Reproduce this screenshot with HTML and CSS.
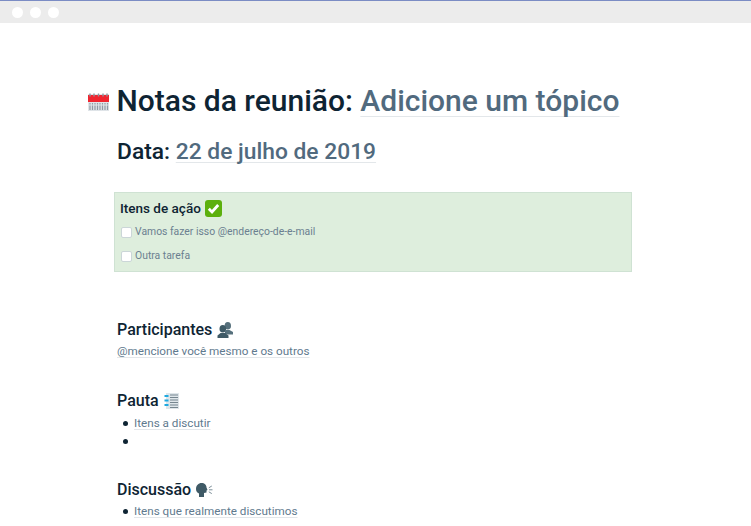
FILE: index.html
```html
<!DOCTYPE html>
<html lang="pt">
<head>
    <meta charset="UTF-8">
    <title>Notas da reunião</title>
    <link rel="stylesheet" href="styles.css">
</head>
<body>

<div class="top_bar">
    <span class="dot"></span>
    <span class="dot"></span>
    <span class="dot"></span>
</div>

<div class="page">

    <h1 class="title">
        <svg class="ic_calendar" viewBox="0 0 21 18" width="21" height="18">
            <rect x="0" y="1" width="21" height="17" fill="#dfe4e8"/>
            <rect x="0" y="2" width="21" height="7" fill="#f0252f"/>
            <path d="M2 0.500v3M6 0.500v3M10.500 0.500v3M15 0.500v3M19 0.500v3" stroke="#8d979e" stroke-width="1.400"/>
            <path d="M2 10v7M4.500 10v7M7 10v7M9.500 10v7M12 10v7M14.500 10v7M17 10v7M19.500 10v7" stroke="#8f9aa3" stroke-width="1.200"/>
            <path d="M0 12h21" stroke="#dfe4e8" stroke-width="1"/>
        </svg>
        Notas da reunião: <span class="ph">Adicione um tópico</span>
    </h1>

    <h2 class="date">Data: <span class="ph">22 de julho de 2019</span></h2>

    <div class="action_box">
        <h3 class="action_title">
            Itens de ação
            <svg class="ic_check" viewBox="0 0 17 17" width="17" height="17">
                <rect width="17" height="17" rx="3" fill="#5cb00d"/>
                <path d="M3.800 8.800l3.200 3.200 6.200-7" fill="none" stroke="#fff" stroke-width="2.800"/>
            </svg>
        </h3>
        <div class="task"><span class="box"></span>Vamos fazer isso @endereço-de-e-mail</div>
        <div class="task"><span class="box"></span>Outra tarefa</div>
    </div>

    <h3 class="section first">
        Participantes
        <svg class="ic_people" viewBox="0 0 16 16" width="16" height="16">
            <ellipse cx="10.800" cy="3.800" rx="3.200" ry="3.800" fill="#56707c"/>
            <path d="M8 12.500v-3l1-1.500h3.500l3.500 2v2.500z" fill="#56707c"/>
            <ellipse cx="5.800" cy="6.800" rx="3.300" ry="3.800" fill="#3f5a66"/>
            <path d="M0.500 16v-2.500l3-2.500h4.500l3.500 2.500v2.500z" fill="#3f5a66"/>
        </svg>
    </h3>
    <p class="line"><span class="ph">@mencione você mesmo e os outros</span></p>

    <h3 class="section second">
        Pauta
        <svg class="ic_list" viewBox="0 0 15 16" width="15" height="16">
            <rect x="2" y="0" width="13" height="16" fill="#dfe6ea"/>
            <path d="M6 2h8M6 4.500h8M6 7h8M6 9.500h8M6 12h8M6 14.500h8" stroke="#76868f" stroke-width="1.200"/>
            <path d="M0.500 3h4M0.500 7.500h4M0.500 12h4" stroke="#1fa9e0" stroke-width="2.200"/>
        </svg>
    </h3>
    <ul class="items">
        <li><span class="ph">Itens a discutir</span></li>
        <li></li>
    </ul>

    <h3 class="section third">
        Discussão
        <svg class="ic_talk" viewBox="0 0 17 14" width="17" height="14">
            <path d="M5.500 0c3 0 5 2 5 4.500l1 2.500-1 .5v2l-2.500.5v4h-5v-3.500c-2-1-3-2.500-3-4.500 0-3.500 2.500-6 5.500-6z" fill="#3f5a66"/>
            <path d="M13 6.800h3.500M12.800 4.800l3-1.800M12.800 8.800l3 1.800" stroke="#7d8f99" stroke-width="1"/>
        </svg>
    </h3>
    <ul class="items last">
        <li><span class="ph">Itens que realmente discutimos</span></li>
    </ul>

</div>

</body>
</html>
```

FILE: styles.css
```css
*{
    margin: 0px;
    padding: 0px;
    box-sizing: border-box;
}
html,body{
    height: 526px;
    overflow: hidden;
}
body{
    background-color: white;
    font-family: "Roboto", "Liberation Sans", sans-serif;
    color: #0e2433;
}

.top_bar{
    height: 23px;
    background-color: #ececec;
    border-top: 1px solid #7b8cc4;
    display: flex;
    align-items: center;
    gap: 7px;
    padding-left: 12px;
}
.dot{
    width: 11px;
    height: 11px;
    border-radius: 50%;
    background-color: white;
}

.page{
    padding: 58px 0px 0px 117px;
}

.ph{
    color: #516a7e;
    text-decoration: underline;
    text-decoration-color: #e3e7ea;
    text-decoration-thickness: 1px;
    text-decoration-skip-ink: none;
    text-underline-offset: 0.15em;
}

.title{
    font-size: 30px;
    font-weight: 500;
    line-height: 40px;
}
.ic_calendar{
    margin-left: -29px;
    margin-right: 0px;
}

.date{
    font-size: 22.8px;
    font-weight: 500;
    line-height: 30px;
    margin-top: 16px;
}

.action_box{
    width: 518px;
    height: 80px;
    margin: 25px 0px 0px -3px;
    padding: 6px 6px;
    background-color: #deeedd;
    border: 1px solid #cfe2d3;
}
.action_title{
    font-size: 13.5px;
    font-weight: 500;
    line-height: 18px;
    margin-left: -1px;
    margin-bottom: 3px;
    display: flex;
    align-items: center;
    gap: 4px;
}
.task{
    font-size: 10.4px;
    line-height: 24px;
    color: #6b8090;
    display: flex;
    align-items: center;
}
.box{
    width: 11px;
    height: 11px;
    margin-right: 3px;
    background-color: white;
    border: 1px solid #cbd6d8;
    border-radius: 2px;
}

.section{
    font-size: 16px;
    font-weight: 500;
    line-height: 22px;
    display: flex;
    align-items: center;
    gap: 5px;
}
.first{
    margin-top: 47px;
}
.second{
    margin-top: 30px;
}
.third{
    margin-top: 29px;
}

.line{
    font-size: 11.7px;
    line-height: 18px;
    margin-top: 1px;
}
.line .ph,.items .ph{
    color: #5f7a8e;
}

.items{
    list-style: none;
    margin-top: 2px;
}
.last{
    margin-top: 1px;
}
.items li{
    font-size: 11.7px;
    line-height: 18px;
    height: 18px;
    padding-left: 17px;
    display: flex;
    align-items: center;
}
.items li::before{
    content: "";
    width: 5px;
    height: 5px;
    border-radius: 50%;
    background-color: #0e2433;
    margin: 0px 6px 0px -11px;
}
```
